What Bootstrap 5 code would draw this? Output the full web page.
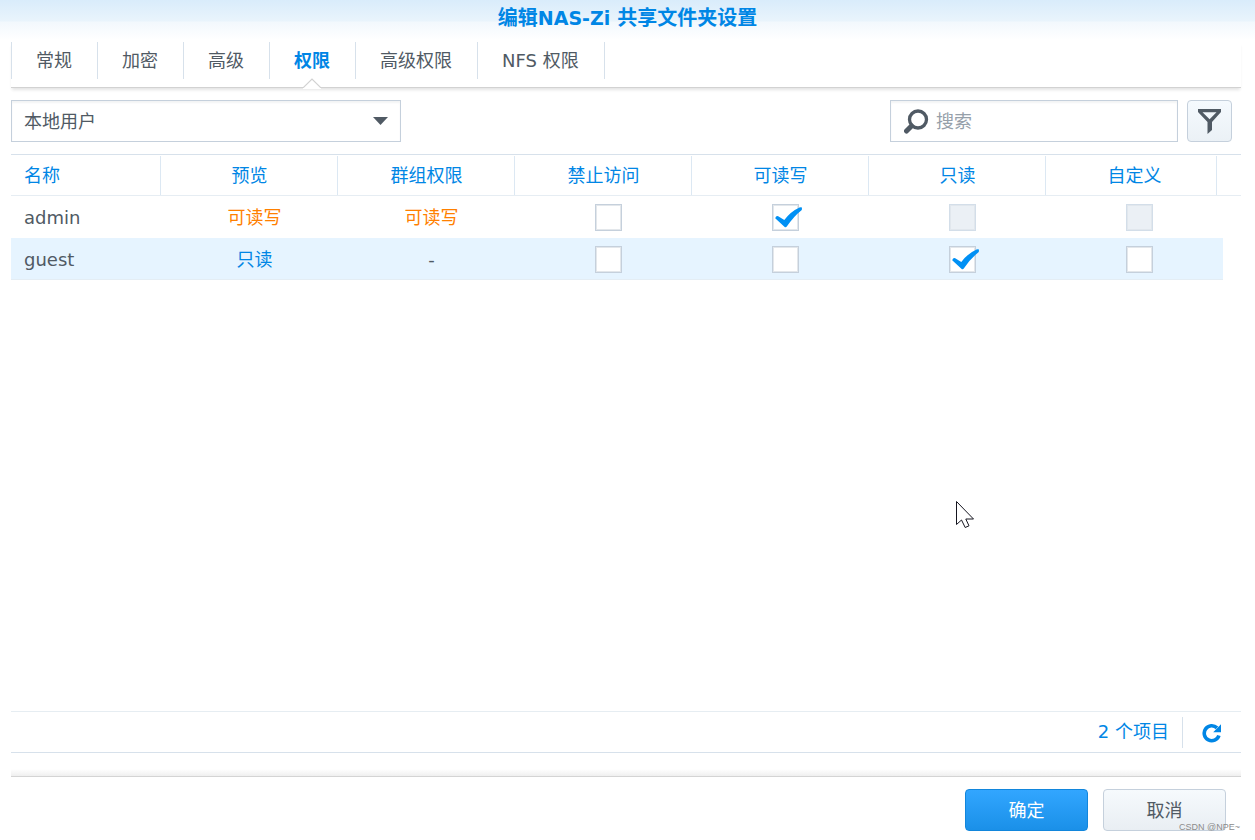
<!DOCTYPE html>
<html lang="zh-CN">
<head>
<meta charset="utf-8">
<meta name="viewport" content="width=device-width, initial-scale=1">
<title>编辑NAS-Zi 共享文件夹设置</title>
<link href="https://cdn.jsdelivr.net/npm/bootstrap@5.3.0/dist/css/bootstrap.min.css" rel="stylesheet">
<style>
  :root { --ink: #505a64; --blue: #0086e5; --edge: #c5d0dc; --rule: #d7e1eb; }
  body { font: 18px/24px "DejaVu Sans", "Noto Sans CJK SC", sans-serif; color: var(--ink); background: #fff; }
  .dialog { min-height: 100vh; padding-bottom: 9px; }
  .dialog-title { height: 42px; padding-top: 6px; background: linear-gradient(#d9ecfb 0, #e9f4fc 21px, #f2f8fd 22px, #fff 40px); }
  .dialog-title h1 { font-size: 20px; line-height: 24px; font-weight: 700; color: var(--blue); }
  .dialog-title span { font-size: 19px; }
  .dialog-main { padding: 0 14px 0 11px; }

  .tab-strip { height: 46px; border-bottom: 1px solid #d2d2d2; box-shadow: 0 3px 3px -1px #e4e4e4; }
  .tab-strip .nav-item { height: 37px; border-right: 1px solid var(--rule); }
  .tab-strip .nav-item:first-child { border-left: 1px solid var(--rule); }
  .tab-strip .nav-link { position: relative; height: 46px; padding: 7px 25px 0 24px; color: var(--ink); }
  .tab-strip .nav-link.active { font-weight: 700; color: var(--blue); }
  .tab-pointer { position: absolute; left: 50%; bottom: -1px; margin-left: -11px; }

  .toolbar { padding: 12px 9px 12px 0; }
  .user-kind { width: 390px; height: 42px; padding: 2px 12px 0; border: 1px solid var(--edge); border-radius: 0; color: var(--ink); font-size: 18px; line-height: 24px; box-shadow: inset 0 2px 2px #f3f4f5;
    background: #fff url("data:image/svg+xml,%3Csvg xmlns='http://www.w3.org/2000/svg' viewBox='0 0 15 8'%3E%3Cpath fill='%23505a64' d='M0 0h15L7.500 8z'/%3E%3C/svg%3E") no-repeat right 12px center / 15px 8px; }
  .search-box { width: 288px; height: 42px; margin-right: 9px; padding: 0 13px; border: 1px solid var(--edge); box-shadow: inset 0 2px 2px #f3f4f5; }
  .search-box svg { margin-right: 7px; }
  .search-box input { padding: 2px 0 0; border: 0; border-radius: 0; background: none; color: var(--ink); font-size: 18px; line-height: 24px; box-shadow: none; }
  .search-box input::placeholder { color: #96a0aa; }
  .btn-tool { width: 45px; height: 42px; padding: 0; border: 1px solid var(--edge); border-radius: 4px; background: linear-gradient(#f5fafe, #ebf1f6); }

  .list-area { border-top: 1px solid var(--rule); border-bottom: 1px solid #e6edf2; }
  .perm-table { table-layout: fixed; border-collapse: separate; border-spacing: 0; color: var(--ink); }
  .perm-table th, .perm-table td { padding: 2px 0 0; text-align: center; vertical-align: middle; font-weight: 400; }
  .perm-table thead th { height: 41px; color: var(--blue); border-bottom: 1px solid #e6edf3; background: linear-gradient(#dce8f3, #dce8f3) no-repeat right 0 top 1px / 1px 39px; }
  .perm-table thead .last-perm { background-position: right 6px top 1px; }
  .perm-table thead .spacer { background: none; }
  .perm-table .col-name { width: 150px; padding-left: 13px; text-align: left; }
  .perm-table .spacer { width: 18px; }
  .perm-table tbody tr > * { height: 42px; border-bottom: 1px solid transparent; }
  .perm-table tbody td { padding-left: 10px; }
  .perm-table tbody .picked > :not(.spacer) { background: #e6f4ff; border-bottom-color: #e4edf4; }
  .text-rw { color: #ff8000; }
  .text-ro { color: var(--blue); }

  .tick { position: relative; display: block; width: 27px; height: 27px; margin: 0 auto; }
  .tick .form-check-input { display: block; float: none; width: 27px; height: 27px; margin: 0; border: 1px solid var(--edge); border-radius: 0; background: #fff; box-shadow: inset 0 0 0 1px #e3e7eb; }
  .tick .form-check-input:disabled { opacity: 1; border-color: #d3dee9; background: #ebf0f5; box-shadow: inset 0 0 0 1px #e1e7ed; }
  .tick svg { position: absolute; left: 0; top: 0; display: none; pointer-events: none; }
  .tick input:checked + svg { display: block; }

  .pointer { position: absolute; left: 944px; top: 345px; }
  .status-bar { height: 41px; border-bottom: 1px solid var(--rule); color: var(--blue); }
  .status-bar .count { height: 31px; padding: 3px 13px 0 0; border-right: 1px solid var(--rule); }
  .btn-reload { width: 58px; padding: 2px 0 0; border: 0; }
  .footer-rule { height: 24px; border-bottom: 1px solid #d4d4d4; background: linear-gradient(#fff 16px, #ededed 24px); }
  .actions { gap: 15px; padding: 12px 15px 0 0; }
  .actions .btn { width: 123px; height: 42px; padding: 2px 0 0; border-radius: 4px; font-size: 18px; line-height: 24px; }
  .btn-ok { color: #fff; border: 1px solid #1286dc; background: linear-gradient(#32a6ff, #1a90e8); }
  .btn-plain { color: var(--ink); border: 1px solid var(--edge); background: linear-gradient(#f6fafd, #e9eef3); }
  .watermark { position: absolute; right: 15px; bottom: 7px; font: 9px/12px "Liberation Sans", sans-serif; color: #8c8c8c; }
</style>
</head>
<body>
<svg class="d-none" aria-hidden="true">
  <symbol id="check" viewBox="0 0 32 27">
    <path d="M3.200 14.300Q4 11.500 6.200 12.200L12.300 16Q18.500 7.500 28 3.200L30 3.500L29.800 5.900Q21.500 12.500 14.800 22.500Q13.700 24 12.400 22.800Z" fill="#0090f4"/>
  </symbol>
</svg>
<div class="dialog position-relative d-flex flex-column">
  <header class="dialog-title text-center">
    <h1 class="m-0">编辑<span>NAS-Zi</span> 共享文件夹设置</h1>
  </header>

  <main class="dialog-main d-flex flex-column flex-grow-1">
    <ul class="nav tab-strip flex-nowrap">
      <li class="nav-item"><a class="nav-link" href="#">常规</a></li>
      <li class="nav-item"><a class="nav-link" href="#">加密</a></li>
      <li class="nav-item"><a class="nav-link" href="#">高级</a></li>
      <li class="nav-item"><a class="nav-link active" href="#" aria-current="page">权限
        <svg class="tab-pointer" width="20" height="11" viewBox="0 0 20 11" aria-hidden="true"><path d="M1 9.500L10 .8L19 9.500V11H1z" fill="#fff"/><path d="M0 9.500H1.500L10 1L18.500 9.500H20" fill="none" stroke="#d2d2d2" stroke-width="1.200"/></svg></a></li>
      <li class="nav-item"><a class="nav-link" href="#">高级权限</a></li>
      <li class="nav-item"><a class="nav-link" href="#">NFS 权限</a></li>
    </ul>

    <div class="toolbar d-flex align-items-center">
      <select class="form-select user-kind" aria-label="用户类型"><option>本地用户</option></select>
      <div class="search-box d-flex align-items-center ms-auto">
        <svg class="flex-shrink-0" width="25" height="25" viewBox="0 0 25 25" aria-hidden="true"><circle cx="14" cy="10.500" r="8.500" fill="none" stroke="#505a64" stroke-width="3.300"/><path d="M7.500 17L2.500 22" stroke="#505a64" stroke-width="5" stroke-linecap="round"/></svg>
        <input class="form-control" type="text" placeholder="搜索" aria-label="搜索">
      </div>
      <button class="btn btn-tool d-flex align-items-center justify-content-center" type="button" aria-label="筛选">
        <svg width="23" height="25" viewBox="0 0 23 25" aria-hidden="true"><path fill="#505a64" fill-rule="evenodd" d="M0 0H23V3L14 13V21L9.500 25V13L0 3ZM4.500 3.200L11.600 10.200L18.500 3.200Z"/></svg>
      </button>
    </div>

    <section class="list-area position-relative flex-grow-1">
      <table class="perm-table w-100">
        <thead>
          <tr><th class="col-name">名称</th><th>预览</th><th>群组权限</th><th>禁止访问</th><th>可读写</th><th>只读</th><th class="last-perm">自定义</th><th class="spacer"></th></tr>
        </thead>
        <tbody>
          <tr>
            <th class="col-name" scope="row">admin</th>
            <td class="text-rw">可读写</td>
            <td class="text-rw">可读写</td>
            <td><label class="tick"><input class="form-check-input" type="checkbox" aria-label="admin 禁止访问"><svg width="32" height="27"><use href="#check"/></svg></label></td>
            <td><label class="tick"><input class="form-check-input" type="checkbox" aria-label="admin 可读写" checked><svg width="32" height="27"><use href="#check"/></svg></label></td>
            <td><label class="tick"><input class="form-check-input" type="checkbox" aria-label="admin 只读" disabled></label></td>
            <td><label class="tick"><input class="form-check-input" type="checkbox" aria-label="admin 自定义" disabled></label></td>
            <td class="spacer"></td>
          </tr>
          <tr class="picked">
            <th class="col-name" scope="row">guest</th>
            <td class="text-ro">只读</td>
            <td>-</td>
            <td><label class="tick"><input class="form-check-input" type="checkbox" aria-label="guest 禁止访问"><svg width="32" height="27"><use href="#check"/></svg></label></td>
            <td><label class="tick"><input class="form-check-input" type="checkbox" aria-label="guest 可读写"><svg width="32" height="27"><use href="#check"/></svg></label></td>
            <td><label class="tick"><input class="form-check-input" type="checkbox" aria-label="guest 只读" checked><svg width="32" height="27"><use href="#check"/></svg></label></td>
            <td><label class="tick"><input class="form-check-input" type="checkbox" aria-label="guest 自定义"><svg width="32" height="27"><use href="#check"/></svg></label></td>
            <td class="spacer"></td>
          </tr>
        </tbody>
      </table>
      <svg class="pointer" width="20" height="29" viewBox="0 0 20 29" aria-hidden="true"><path d="M1.500 1.500V24.500L6.500 20L10.200 27.500L14 25.800L10.800 19H18.500Z" fill="#fff" stroke="#15151f"/></svg>
    </section>

    <div class="status-bar d-flex align-items-center justify-content-end">
      <div class="count">2 个项目</div>
      <button class="btn btn-reload d-flex justify-content-center" type="button" aria-label="刷新">
        <svg width="20" height="20" viewBox="0 0 20 20" aria-hidden="true"><path d="M15 4.900A7.500 7.500 0 1 0 16.900 12.500" fill="none" stroke="#0086e5" stroke-width="3.600"/><path d="M19 1.300V9.300H11.200Z" fill="#0086e5"/></svg>
      </button>
    </div>

    <div class="footer-rule"></div>
    <div class="actions d-flex justify-content-end">
      <button class="btn btn-ok" type="button">确定</button>
      <button class="btn btn-plain" type="button">取消</button>
    </div>
  </main>
  <div class="watermark">CSDN @NPE~</div>
</div>
<script src="https://cdn.jsdelivr.net/npm/bootstrap@5.3.0/dist/js/bootstrap.bundle.min.js"></script>
</body>
</html>
